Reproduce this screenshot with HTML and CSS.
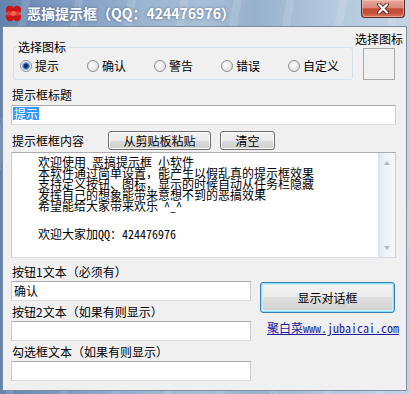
FILE: index.html
```html
<!DOCTYPE html>
<html lang="zh-CN">
<head>
    <meta charset="UTF-8">
    <title>恶搞提示框</title>
    <link rel="stylesheet" href="styles.css">
</head>
<body>
    <div class="window">
        <div class="titlebar">
            <svg class="app-icon" width="17" height="17" viewBox="0 0 17 17">
                <circle cx="5" cy="5" r="4.2" fill="#c8161b"/>
                <circle cx="12" cy="5" r="4.2" fill="#c8161b"/>
                <circle cx="5" cy="12" r="4.2" fill="#c8161b"/>
                <circle cx="12" cy="12" r="4.2" fill="#c8161b"/>
                <rect x="2" y="6.5" width="13" height="4" rx="1.5" fill="#ee3b2e"/>
                <circle cx="8.5" cy="8.5" r="2.4" fill="#f26a4f"/>
            </svg>
            <div class="title">恶搞提示框（QQ：424476976）</div>
            <div class="close">
                <svg width="14" height="11" viewBox="0 0 14 11">
                    <path d="M3 1.5 L11 9.5 M11 1.5 L3 9.5" stroke="#6b2a22" stroke-width="4" stroke-linecap="round"/>
                    <path d="M3 1.5 L11 9.5 M11 1.5 L3 9.5" stroke="#fff" stroke-width="2.2" stroke-linecap="round"/>
                </svg>
            </div>
        </div>

        <div class="client">
            <div class="icon-row">
                <fieldset class="icon-group">
                    <legend>选择图标</legend>
                    <div class="radios">
                        <label class="opt"><span class="radio checked"></span>提示</label>
                        <label class="opt"><span class="radio"></span>确认</label>
                        <label class="opt"><span class="radio"></span>警告</label>
                        <label class="opt"><span class="radio"></span>错误</label>
                        <label class="opt"><span class="radio"></span>自定义</label>
                    </div>
                </fieldset>
                <div class="icon-pick">
                    <div class="pick-label">选择图标</div>
                    <div class="icon-box"></div>
                </div>
            </div>

            <div class="label title-label">提示框标题</div>
            <div class="field wide"><span class="sel">提示</span></div>

            <div class="content-head">
                <span class="head-label">提示框框内容</span>
                <button class="btn paste">从剪贴板粘贴</button>
                <button class="btn clear">清空</button>
            </div>

            <div class="memo">
                <div class="memo-text">
                    <div class="memo-lines">    欢迎使用 恶搞提示框 小软件
    本软件通过简单设置，能产生以假乱真的提示框效果
    支持定义按钮、图标，显示的时候自动从任务栏隐藏
    发挥自己的想象能带来意想不到的恶搞效果
    希望能给大家带来欢乐 ^_^</div>
                    <div class="memo-qq">    欢迎大家加QQ：424476976</div>
                </div>
                <div class="scroll">
                    <span class="arrow up"></span>
                    <span class="arrow down"></span>
                </div>
            </div>

            <div class="bottom">
                <div class="fields">
                    <div class="label">按钮1文本（必须有）</div>
                    <div class="field">确认</div>
                    <div class="label next">按钮2文本（如果有则显示）</div>
                    <div class="field"></div>
                    <div class="label next">勾选框文本（如果有则显示）</div>
                    <div class="field"></div>
                </div>
                <div class="actions">
                    <button class="btn btn-default">显示对话框</button>
                    <a class="site-link" href="#">聚白菜www.jubaicai.com</a>
                </div>
            </div>
        </div>
    </div>
</body>
</html>
```

FILE: styles.css
```css
* {
    box-sizing: border-box;
}
body {
    margin: 0;
    font-family: "Noto Sans CJK SC", sans-serif;
    font-size: 12px;
    color: #000;
    background: #fff;
}
.window {
    width: 410px;
    height: 394px;
    padding: 0 3px 3px 2px;
    display: flex;
    flex-direction: column;
    background:
        repeating-linear-gradient(100deg, rgba(255, 255, 255, 0) 0 22px, rgba(255, 255, 255, 0.12) 22px 30px, rgba(255, 255, 255, 0) 30px 52px),
        linear-gradient(90deg, #6283ae 0%, #7896bd 12%, #9bb4d0 35%, #a9bfd8 50%, #97b0cc 62%, #b3c8dd 80%, #c2d4e6 100%);
}
.titlebar {
    height: 26px;
    display: flex;
    align-items: flex-start;
}
.app-icon {
    margin: 5px 0 0 3px;
    flex: none;
}
.title {
    margin: 4px 0 0 5px;
    color: #fff;
    font-weight: bold;
    font-size: 14px;
    line-height: 18px;
    text-shadow: 0 0 3px rgba(30, 50, 80, 0.55);
}
.close {
    margin-left: auto;
    margin-right: 2px;
    width: 44px;
    height: 18px;
    display: flex;
    align-items: center;
    justify-content: center;
    border: 1px solid #5e2b26;
    border-top: none;
    border-radius: 0 0 4px 4px;
    background: linear-gradient(#e9aa9c 0%, #da8a7b 45%, #c44b3a 52%, #c6513f 78%, #df7a5a 100%);
    box-shadow: inset 0 0 0 1px rgba(255, 210, 200, 0.45);
}

.client {
    flex: 1;
    background: #f0f0f0;
    border: 1px solid #7d8ea3;
    padding: 5px 3px 0 8px;
}

/* choose icon */
.icon-row {
    display: flex;
}
.icon-group {
    margin: 8px 0 0 2px;
    width: 340px;
    min-width: 0;
    border: 1px solid #d5dfe5;
    border-radius: 3px;
    padding: 5px 0 6px 6px;
}
.icon-group legend {
    margin-left: -4px;
    padding: 0 2px;
    line-height: 14px;
}
.radios {
    display: flex;
    line-height: 14px;
}
.opt {
    width: 67px;
    flex: none;
    display: flex;
    align-items: center;
    gap: 3px;
}
.opt:last-child {
    width: auto;
}
.radio {
    width: 12px;
    height: 12px;
    border-radius: 50%;
    border: 1px solid #8e8f8f;
    background: radial-gradient(circle at 40% 40%, #fdfdfd 0, #e6e6e6 60%, #d2d2d2 100%);
}
.radio.checked {
    background: radial-gradient(circle, #0c2d66 0 1.8px, #2f6fc9 2.6px, #7fb0ee 3.6px, #eef2f6 4.4px);
}
.icon-pick {
    margin-left: 2px;
}
.pick-label {
    line-height: 14px;
}
.icon-box {
    width: 32px;
    height: 32px;
    margin: 2px 0 0 8px;
    border: 1px solid #a8a8a8;
    background: #f0f0f0;
}

/* labels and text boxes */
.label {
    margin-left: 1px;
    line-height: 14px;
}
.title-label {
    margin-top: 8px;
}
.label.next {
    margin-top: 4px;
}
.field {
    margin-top: 2px;
    width: 240px;
    height: 20px;
    padding: 0 2px;
    line-height: 18px;
    background: #fff;
    border: 1px solid;
    border-color: #abadb3 #c9ccd2 #d9dce1 #c9ccd2;
}
.field.wide {
    margin-top: 3px;
    width: 385px;
    padding: 1px 0 0 1px;
}
.sel {
    display: inline-block;
    height: 13px;
    line-height: 13px;
    padding: 0 1px;
    background: #3399ff;
    color: #fff;
    vertical-align: top;
}

/* content header */
.content-head {
    margin-top: 6px;
    height: 19px;
    display: flex;
    align-items: center;
}
.head-label {
    margin-left: 1px;
    line-height: 14px;
}
.btn {
    height: 19px;
    padding: 0;
    font-family: inherit;
    font-size: 12px;
    line-height: 16px;
    color: #000;
    border: 1px solid #707070;
    border-radius: 3px;
    background: linear-gradient(#f2f2f2 0%, #ebebeb 50%, #dddddd 50%, #cfcfcf 100%);
    box-shadow: inset 0 0 0 1px #fafafa;
}
.paste {
    margin-left: 24px;
    width: 103px;
}
.clear {
    margin-left: 9px;
    width: 55px;
}

/* memo box */
.memo {
    margin-top: 2px;
    width: 385px;
    height: 106px;
    display: flex;
    background: #fff;
    border: 1px solid;
    border-color: #abadb3 #c9ccd2 #d9dce1 #c9ccd2;
}
.memo-text {
    flex: 1;
    padding: 3px 0 0 2px;
    font-family: "Noto Sans Mono CJK SC", "Noto Sans CJK SC", monospace;
    font-size: 12px;
    line-height: 11px;
}
.memo-lines,
.memo-qq {
    white-space: pre;
}
.memo-qq {
    margin-top: 17px;
}
.scroll {
    width: 17px;
    display: flex;
    flex-direction: column;
    justify-content: space-between;
    align-items: center;
    padding: 8px 0 7px;
    background: linear-gradient(90deg, #dde4ed 0, #ecf1f6 35%, #f6f8fb 100%);
}
.arrow {
    width: 0;
    height: 0;
    border-left: 3.5px solid transparent;
    border-right: 3.5px solid transparent;
}
.arrow.up {
    border-bottom: 4px solid #b8bcc2;
}
.arrow.down {
    border-top: 4px solid #b8bcc2;
}

/* bottom area */
.bottom {
    margin-top: 7px;
    display: flex;
}
.actions {
    margin-left: 9px;
    display: flex;
    flex-direction: column;
    align-items: flex-start;
}
.btn-default {
    margin-top: 17px;
    width: 135px;
    height: 31px;
    border-color: #3c7fb1;
    border-radius: 3px;
    box-shadow: inset 0 0 0 1px #8fe0fa, inset 0 0 0 2px #c8eefc;
    background: linear-gradient(#f4f4f4 0%, #ececec 50%, #dedede 50%, #d2d2d2 100%);
}
.site-link {
    margin: 8px 0 0 7px;
    line-height: 14px;
    font-family: "Noto Sans Mono CJK SC", "Noto Sans CJK SC", monospace;
    color: #1c1c9c;
    text-decoration: underline;
}
```
